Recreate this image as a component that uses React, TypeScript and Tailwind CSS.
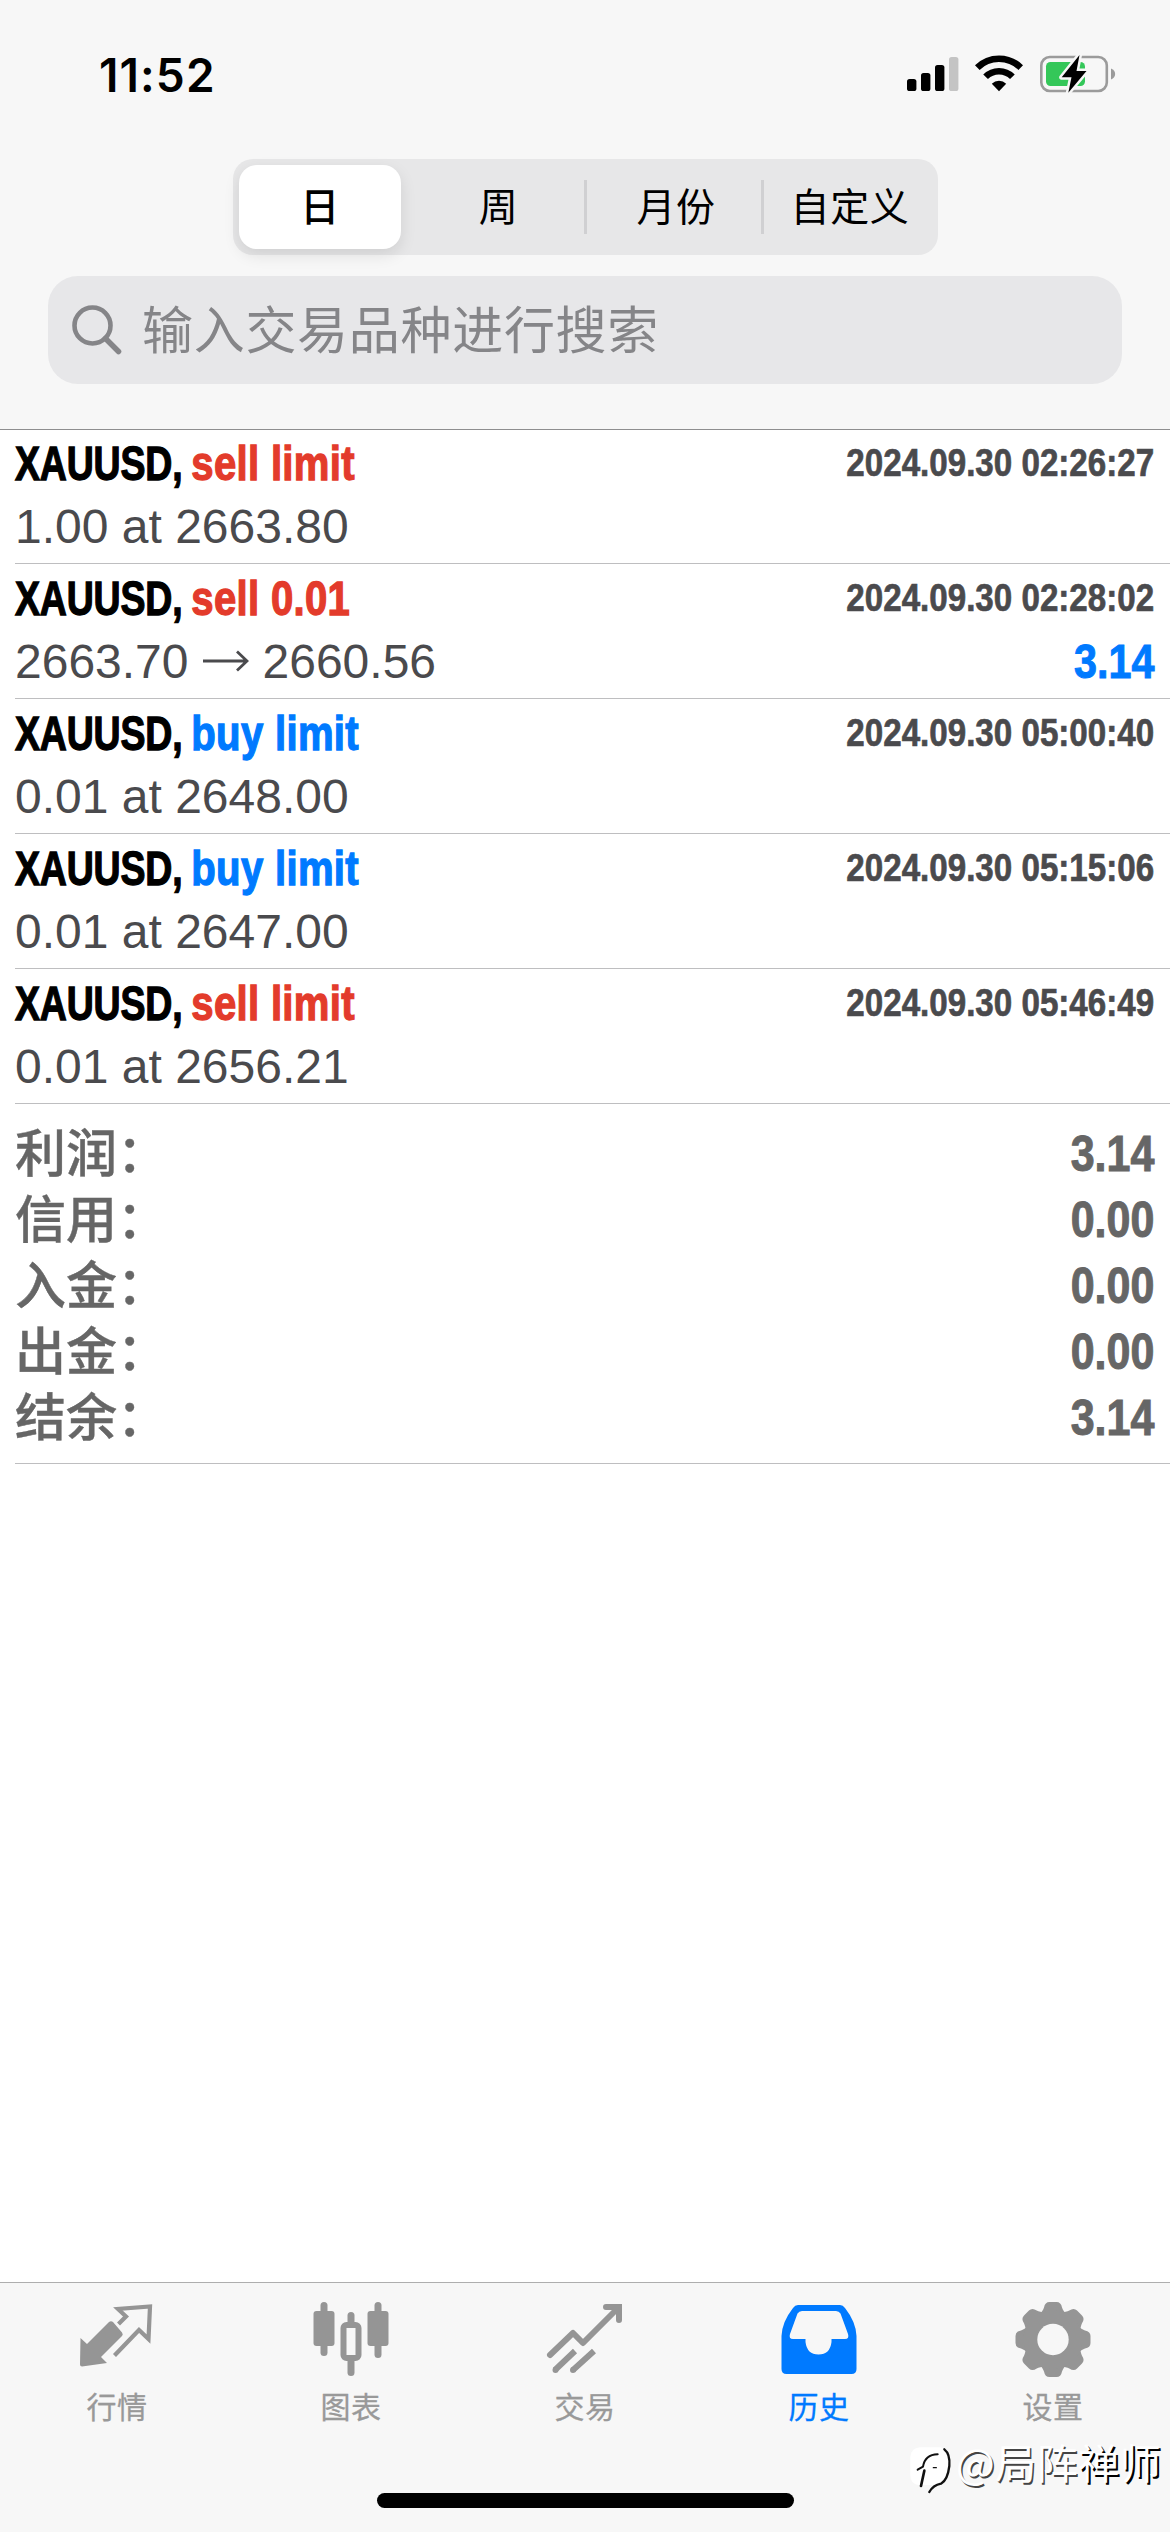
import type { ReactNode } from "react";

const CJK = "font-['Noto_Sans_CJK_SC',sans-serif]";
const HELV = "font-['Liberation_Sans',sans-serif]";

type Deal = {
  kind: string;
  side: "sell" | "buy";
  time: string;
  detail: ReactNode;
  profit?: string;
};

const Arrow = () => (
  <svg width="46" height="22" viewBox="0 0 46 22" fill="none" stroke="currentColor" strokeWidth="2.8" className="ml-[14px] mr-[14px] mb-[6px] inline-block align-baseline">
    <path d="M0 11H44M34 1.5L44 11L34 20.5" />
  </svg>
);

const deals: Deal[] = [
  { kind: "sell limit", side: "sell", time: "2024.09.30 02:26:27", detail: "1.00 at 2663.80" },
  { kind: "sell 0.01", side: "sell", time: "2024.09.30 02:28:02", detail: <>2663.70<Arrow />2660.56</>, profit: "3.14" },
  { kind: "buy limit", side: "buy", time: "2024.09.30 05:00:40", detail: "0.01 at 2648.00" },
  { kind: "buy limit", side: "buy", time: "2024.09.30 05:15:06", detail: "0.01 at 2647.00" },
  { kind: "sell limit", side: "sell", time: "2024.09.30 05:46:49", detail: "0.01 at 2656.21" },
];

const totals = [
  ["利润：", "3.14"],
  ["信用：", "0.00"],
  ["入金：", "0.00"],
  ["出金：", "0.00"],
  ["结余：", "3.14"],
];

function StatusBar() {
  return (
    <div className="flex h-[159px] items-start justify-between pl-[99px] pr-[54px] pt-[53px]">
      <span className="font-['Inter',sans-serif] text-[46px] font-semibold leading-[44px] tracking-[1.1px] text-black">11:52</span>
      <svg width="209" height="40" viewBox="907 54 209 40" className="mt-px">
        <g fill="#000">
          <rect x="907" y="79" width="9.4" height="12" rx="2.6" />
          <rect x="921" y="73" width="9.4" height="18" rx="2.6" />
          <rect x="935" y="65" width="9.4" height="26" rx="2.6" />
          <rect x="949" y="57" width="9.4" height="34" rx="2.6" fill="#c4c4c4" />
          <path d="M999 91.300l-7.200-7.600a10.500 10.500 0 0 1 14.400 0z" />
        </g>
        <g fill="none" stroke="#000" strokeWidth="6.6">
          <path d="M977.3 67.600a31 31 0 0 1 43.400 0" />
          <path d="M985.600 76.800a18.800 18.800 0 0 1 26.800 0" />
        </g>
        <rect x="1041.3" y="57" width="65.500" height="34" rx="8.5" fill="none" stroke="#9b9b9b" strokeWidth="2.600" />
        <path d="M1111 68.500c5.500 2 5.500 9 0 11z" fill="#9b9b9b" />
        <rect x="1046" y="62" width="39" height="24" rx="4.500" fill="#34c759" />
        <path d="M1079.500 55L1061.700 77.300H1071.500L1068.300 92.700L1086.500 71H1076.500z" fill="#000" stroke="#f7f7f7" strokeWidth="5" strokeLinejoin="round" paintOrder="stroke" />
      </svg>
    </div>
  );
}

function Segments() {
  return (
    <div className={"ml-[233px] flex h-24 w-[705px] items-center rounded-[20px] bg-[#e7e7e8] px-1.5 text-[39px] leading-none tracking-[0.6px] text-black " + CJK}>
      <div className="flex h-[84px] w-[162px] items-center justify-center rounded-[18px] bg-white font-medium shadow-[0_6px_16px_rgba(0,0,0,0.10)]">
        <span className="relative -top-[3px]">日</span>
      </div>
      <div className="ml-3 flex h-[54px] w-[174px] items-center justify-center border-r-[3px] border-[#d0d0d2] pb-[6px]">周</div>
      <div className="flex h-[54px] w-[177px] items-center justify-center border-r-[3px] border-[#d0d0d2] pb-[6px] pl-1">月份</div>
      <div className="flex h-[54px] flex-1 items-center justify-center pb-[6px] pl-1">自定义</div>
    </div>
  );
}

function Search() {
  return (
    <div className={"mx-12 mt-[21px] flex h-[108px] items-center rounded-[30px] bg-[#e7e7e9] text-[#858588] " + CJK}>
      <svg width="50" height="50" viewBox="0 0 50 50" fill="none" stroke="currentColor" className="ml-6">
        <circle cx="20.500" cy="20.500" r="18" strokeWidth="4.600" />
        <path d="M33.500 33.500L46.500 46.500" strokeWidth="5.500" strokeLinecap="round" />
      </svg>
      <span className="mb-[5px] ml-[20px] text-[51px] leading-none tracking-[0.7px]">输入交易品种进行搜索</span>
    </div>
  );
}

function DealRow({ deal, first }: { deal: Deal; first: boolean }) {
  return (
    <li className={(first ? "h-[134px] " : "h-[135px] pt-px ") + "ml-[15px] flex flex-col border-b border-[#bebec0] pr-4 " + HELV}>
      <div className="flex h-[67px] items-start justify-between">
        <p className="flex origin-left scale-x-[0.78] gap-[11px] whitespace-nowrap text-[48px] font-bold leading-[67px] text-black [-webkit-text-stroke:1.3px]">
          <span className="tracking-[-0.2px]">XAUUSD,</span>
          <span className={(deal.side === "sell" ? "text-[#e33b2b]" : "text-[#007aff]") + " origin-left scale-x-[1.07] tracking-[0.4px]"}>{deal.kind}</span>
        </p>
        <p className="origin-right scale-x-[0.85] whitespace-nowrap text-[39px] font-bold leading-[66px] text-[#4a4a4d] [-webkit-text-stroke:0.7px]">{deal.time}</p>
      </div>
      <div className="flex h-[66px] items-start justify-between">
        <p className="whitespace-nowrap text-[48px] leading-[60px] text-[#4a4a4d]">{deal.detail}</p>
        {deal.profit && <p className="origin-right scale-x-[0.86] text-[48px] font-bold leading-[60px] text-[#007aff] [-webkit-text-stroke:1px]">{deal.profit}</p>}
      </div>
    </li>
  );
}

function Totals() {
  return (
    <dl className="ml-[15px] flex h-[360px] flex-col border-b border-[#bebec0] pr-4 pt-4 text-[#666]">
      {totals.map(([label, value]) => (
        <div key={label} className="flex h-[66px] items-start justify-between">
          <dt className={"relative -top-[3px] text-[51px] font-medium leading-[66px] [-webkit-text-stroke:0.4px] " + CJK}>{label}</dt>
          <dd className={"origin-right scale-x-[0.86] text-[50px] font-bold leading-[68px] [-webkit-text-stroke:1px] " + HELV}>{value}</dd>
        </div>
      ))}
    </dl>
  );
}

const QuotesIcon = () => (
  <svg width="76" height="76" viewBox="0 0 76 76">
    <path d="M1.500 35L8 41L30 19q2-1.500 4 0L43 29.500q1.500 2 0 3.500L22 54L28 60L3 63.500q-2 0-2-2z" fill="#959595" />
    <path d="M39.500 21L47 13.500L39 6L71 3.500L69.500 36L60 27L35.500 52.500" fill="none" stroke="#959595" strokeWidth="4.200" />
  </svg>
);

const ChartIcon = () => (
  <svg width="76" height="76" viewBox="0 0 76 76" fill="#959595">
    <rect x="7.500" y="-1" width="7" height="54" rx="3.500" />
    <rect x="0.500" y="8" width="21" height="35" rx="3" />
    <rect x="61.500" y="-1" width="7" height="56" rx="3.500" />
    <rect x="54.500" y="8" width="21" height="35" rx="3" />
    <rect x="34.500" y="9" width="7" height="30" rx="3.500" />
    <rect x="34.500" y="45" width="7" height="28" rx="3.500" />
    <rect x="30.500" y="22" width="15" height="33" rx="3" fill="#f7f7f7" stroke="#959595" strokeWidth="6" />
  </svg>
);

const TradeIcon = () => (
  <svg width="76" height="76" viewBox="0 0 76 76" fill="none" stroke="#959595" strokeWidth="6">
    <path d="M3 52L26 30L36 40L71 5" strokeLinecap="round" strokeLinejoin="round" />
    <path d="M59 4H72V17" strokeLinecap="round" />
    <path d="M28 48L8 67M47 48L26 67" />
    <path d="M8.500 67h0M26 67h0" strokeLinecap="round" />
  </svg>
);

const HistoryIcon = () => (
  <svg width="76" height="76" viewBox="0 0 76 76">
    <path fillRule="evenodd" fill="#007aff" d="M17 2H59Q62 2 64 5Q75 19 75.500 33V66Q75.500 71 70.500 71H5.500Q0.500 71 0.500 66V33Q1 19 12 5Q14 2 17 2ZM21 8Q18 8 16.500 10.500L9 31Q7.500 36 12 36H24.500V39Q26 51.500 37.500 51.500Q49 51.500 50.500 39V36H64Q68.500 36 67 31L59.500 10.500Q58 8 55 8Z" />
  </svg>
);

const SettingsIcon = () => (
  <svg width="76" height="76" viewBox="-38 -36.5 76 76">
    <g fill="#959595">
      {[0, 45, 90, 135, 180, 225, 270, 315].map((a) => (
        <path key={a} transform={`rotate(${a})`} d="M-14 -24Q-10 -29 -9 -32Q-8 -37.500 -3.500 -37.500H3.500Q8 -37.500 9 -32Q10 -29 14 -24z" />
      ))}
      <circle r="29.500" />
    </g>
    <circle r="15.700" fill="#f7f7f7" />
  </svg>
);

const tabs = [
  { label: "行情", icon: <QuotesIcon /> },
  { label: "图表", icon: <ChartIcon /> },
  { label: "交易", icon: <TradeIcon /> },
  { label: "历史", icon: <HistoryIcon />, active: true },
  { label: "设置", icon: <SettingsIcon /> },
];

function Watermark() {
  return (
    <div className={"absolute left-[905px] top-[147px] flex items-start whitespace-nowrap text-[41px] leading-[54px] text-white " + CJK}>
      <svg width="47" height="64" viewBox="0 0 141 192" fill="none" className="shrink-0">
        <path d="M45 52H105Q136 60 135 105Q128 150 95 165H40Q16 162 16 135V80Q18 55 45 52Z" fill="#fff" />
        <g stroke="#111" strokeLinecap="round">
          <path d="M38 119L54 110Q60 74 98 73" strokeWidth="6" />
          <path d="M58 122L48 168" strokeWidth="8" />
          <path d="M118 58Q136 72 133 108Q128 150 108 161Q84 166 73 186" strokeWidth="7" />
          <path d="M85 113H94" strokeWidth="4" />
        </g>
      </svg>
      <span className="ml-[4px] mt-[4px] tracking-[0.5px] [text-shadow:1.5px_1.5px_0.5px_#444]">
        @局阵<span className="[text-shadow:2px_2px_0.5px_#000]">禅师</span>
      </span>
    </div>
  );
}

function TabBar() {
  return (
    <nav className="relative flex h-[250px] flex-col border-t border-[#aeaeae] bg-[#f7f7f7]">
      <div className="grid grid-cols-5">
        {tabs.map((t) => (
          <div key={t.label} className="flex flex-col items-center pt-5 [&>svg]:overflow-visible">
            {t.icon}
            <span className={(t.active ? "text-[#007aff] " : "text-[#999] ") + "mt-[8px] text-[30px] leading-[36px] tracking-[0.6px] [-webkit-text-stroke:0.3px] " + CJK}>{t.label}</span>
          </div>
        ))}
      </div>
      <Watermark />
      <div className="absolute bottom-6 left-[377px] h-[15px] w-[417px] rounded-full bg-black" />
    </nav>
  );
}

export default function App() {
  return (
    <div className="flex h-[2532px] w-[1170px] flex-col overflow-hidden bg-white">
      <header className="h-[430px] border-b border-[#8e8e8f] bg-[#f7f7f7]">
        <StatusBar />
        <Segments />
        <Search />
      </header>
      <main className="flex-1">
        <ul>
          {deals.map((d, i) => (
            <DealRow key={d.time} deal={d} first={i === 0} />
          ))}
        </ul>
        <Totals />
      </main>
      <TabBar />
    </div>
  );
}
